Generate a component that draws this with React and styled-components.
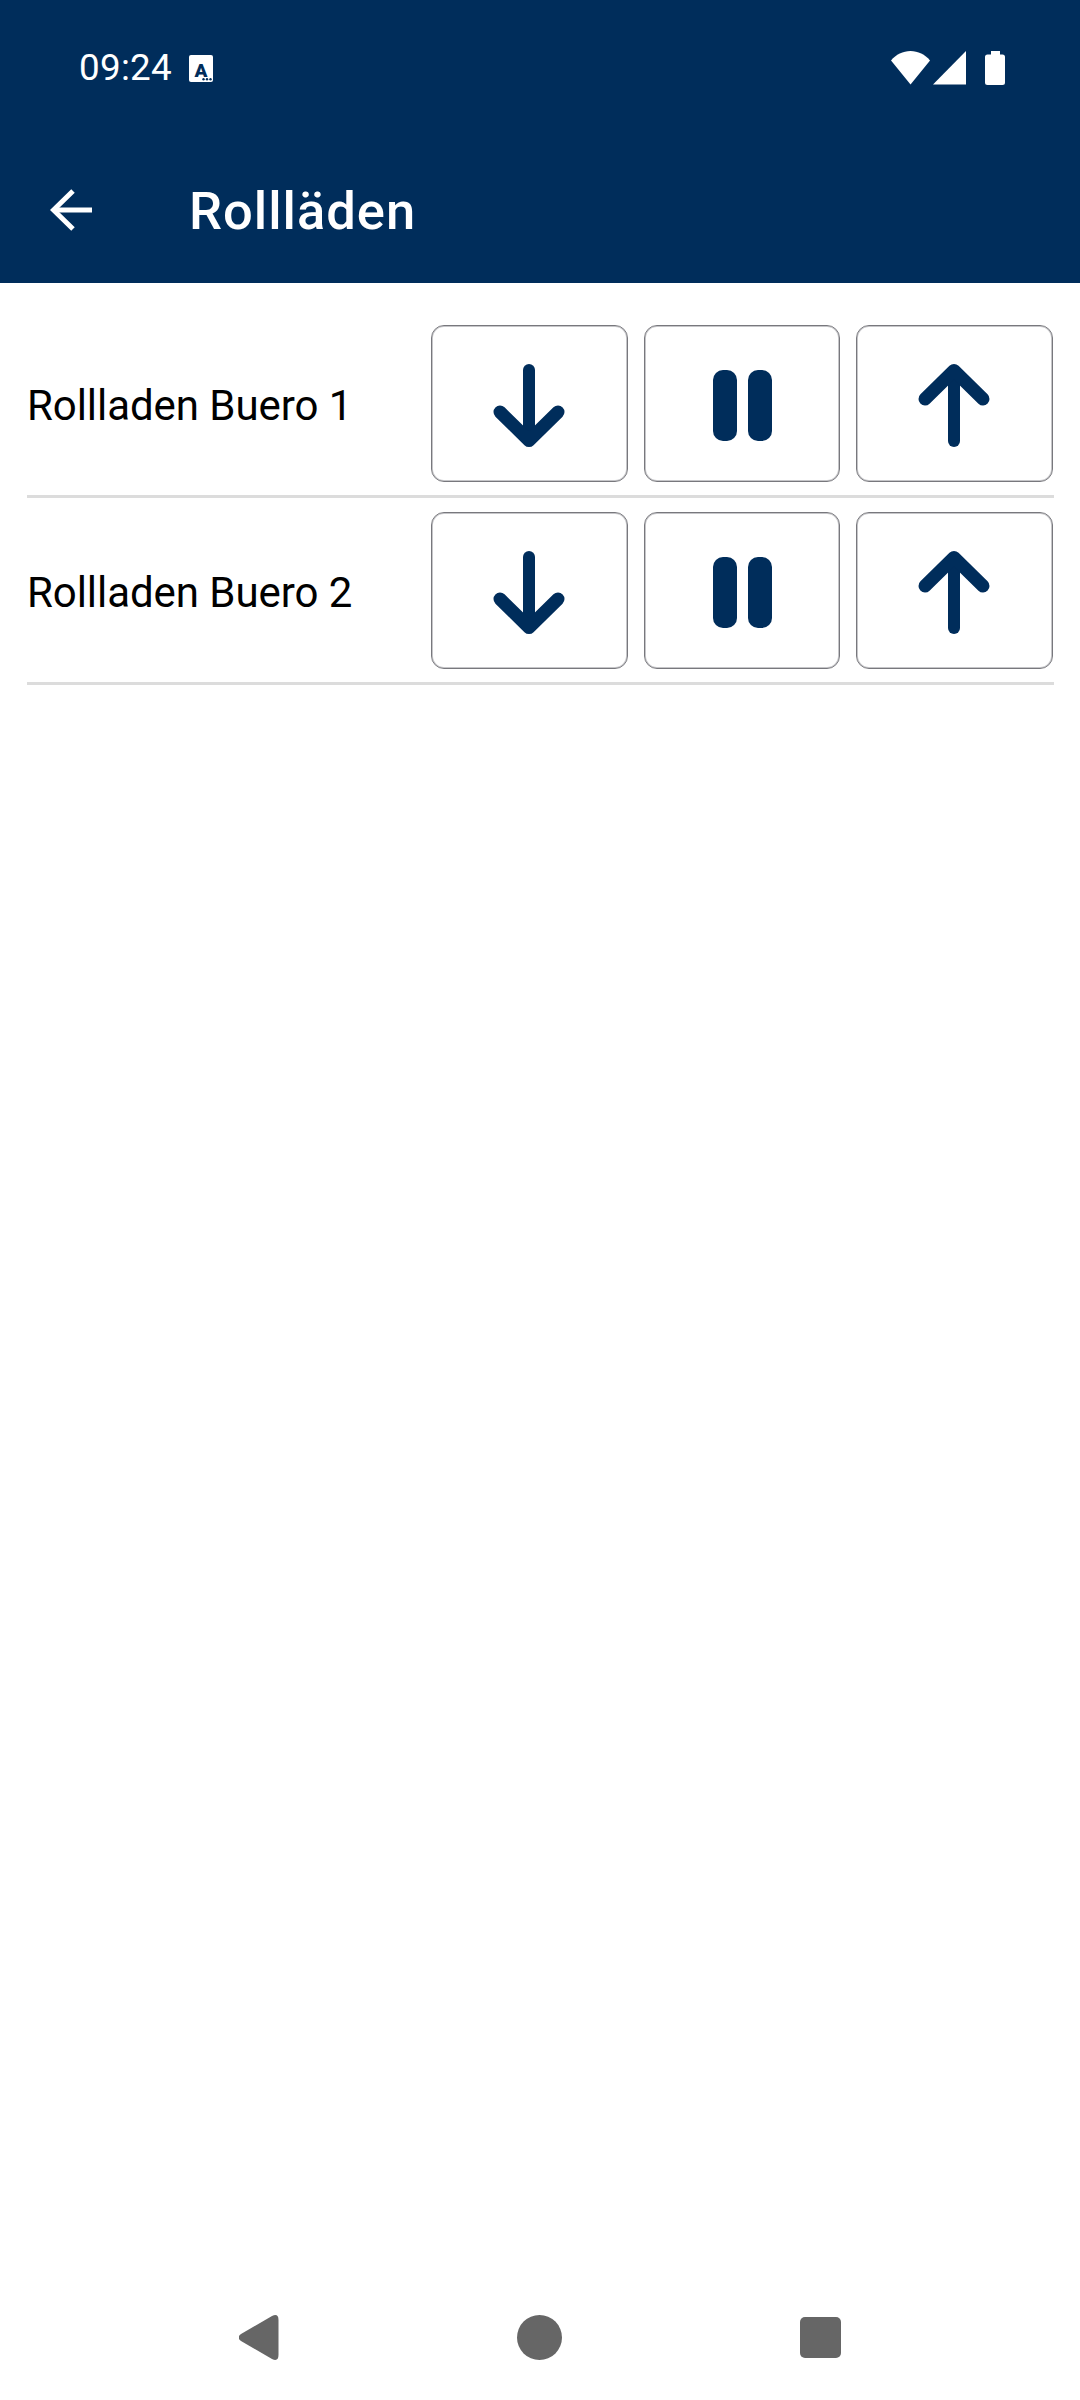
import React from "react";
import styled, { createGlobalStyle } from "styled-components";

const NAVY = "#002d5b";

const Global = createGlobalStyle`
  html, body { margin: 0; padding: 0; background: #fff; }
  body { font-family: Roboto, "Liberation Sans", sans-serif; }
`;

const Screen = styled.div`
  width: 1080px;
  height: 2400px;
  display: flex;
  flex-direction: column;
  background: #fff;
`;

const Header = styled.header`
  background: ${NAVY};
  color: #fff;
  height: 283px;
  display: flex;
  flex-direction: column;
`;

const StatusBar = styled.div`
  height: 136px;
  display: flex;
  align-items: center;
  padding: 0 75px 0 79px;
  box-sizing: border-box;
`;

const Time = styled.span`
  font-size: 36.75px;
  line-height: 1;
  font-weight: 400;
  letter-spacing: 0.3px;
`;

const NoteIcon = styled.svg`
  display: block;
  margin-left: 17px;
`;

const StatusIcons = styled.div`
  margin-left: auto;
  display: flex;
  align-items: center;
`;

const StatusSvg = styled.svg`
  display: block;
  margin-left: ${(p) => p.$gap || 0}px;
`;

const Toolbar = styled.div`
  flex: 1;
  display: flex;
  align-items: center;
  padding-left: 50px;
`;

const BackButton = styled.div`
  width: 42px;
  height: 42px;
  display: flex;
`;

const Title = styled.h1`
  margin: 4px 0 0 97px;
  font-size: 52.5px;
  line-height: 1;
  font-weight: 500;
  letter-spacing: 1px;
  color: #fff;
`;

const List = styled.main`
  flex: 1;
  padding: 28px 26px 0 27px;
`;

const Row = styled.div`
  display: flex;
  align-items: center;
  padding: 14px 1.5px 13px 0;
  border-bottom: 3px solid #dcdcdc;
`;

const RowLabel = styled.span`
  flex: 1;
  padding-top: 4px;
  font-size: 42px;
  line-height: 1;
  letter-spacing: -0.06px;
  color: #000;
`;

const Controls = styled.div`
  display: flex;
  gap: 16px;
`;

const ControlButton = styled.button`
  width: 196.5px;
  height: 157px;
  box-sizing: border-box;
  background: #fff;
  border: 1px solid #78787d;
  box-shadow: inset 0 0 0 1px #c6c6c9;
  border-radius: 13px;
  padding: 4px 0 0;
  display: flex;
  align-items: center;
  justify-content: center;
`;

const NavBar = styled.nav`
  height: 126px;
  padding-right: 1px;
  display: grid;
  grid-template-columns: repeat(3, 281px);
  justify-content: center;
  align-items: center;
  justify-items: center;
`;

const DownIcon = () => (
  <svg width="72" height="83" viewBox="0 0 72 83" fill="none" stroke={NAVY} strokeWidth="12" strokeLinecap="round" strokeLinejoin="round">
    <path d="M36 6V76" />
    <path d="M7 48L36 76.500L65 48" strokeWidth="13" />
  </svg>
);

const UpIcon = () => (
  <svg width="72" height="83" viewBox="0 0 72 83" fill="none" stroke={NAVY} strokeWidth="12" strokeLinecap="round" strokeLinejoin="round">
    <path d="M36 77V7" />
    <path d="M7 35L36 6.500L65 35" strokeWidth="13" />
  </svg>
);

const PauseIcon = () => (
  <svg width="60" height="71" viewBox="0 0 60 71" fill={NAVY}>
    <rect x="1" y="0" width="24" height="71" rx="10" />
    <rect x="36" y="0" width="24" height="71" rx="10" />
  </svg>
);

const controls = [
  { key: "down", Icon: DownIcon },
  { key: "pause", Icon: PauseIcon },
  { key: "up", Icon: UpIcon },
];

const rows = ["Rollladen Buero 1", "Rollladen Buero 2"];

export default function App() {
  return (
    <>
      <Global />
      <Screen>
        <Header>
          <StatusBar>
            <Time>09:24</Time>
            <NoteIcon width="24" height="27" viewBox="0 0 24 27">
              <rect width="24" height="27" rx="2" fill="#fff" />
              <text x="12" y="22" textAnchor="middle" fontFamily="Roboto, sans-serif" fontWeight="900" fontSize="19" fill={NAVY}>A</text>
              <circle cx="14.5" cy="24.3" r="1.2" fill={NAVY} />
              <circle cx="18" cy="24.3" r="1.2" fill={NAVY} />
              <circle cx="21.5" cy="24.3" r="1.2" fill={NAVY} />
            </NoteIcon>
            <StatusIcons>
              <StatusSvg width="39" height="34" viewBox="0 0 39 34">
                <path d="M0 9.500C5 3.500 12 0 19.500 0C27 0 34 3.500 39 9.500L19.500 33.500Z" fill="#fff" />
              </StatusSvg>
              <StatusSvg $gap={3} width="33" height="34" viewBox="0 0 33 34">
                <path d="M33 0V33.500H0Z" fill="#fff" />
              </StatusSvg>
              <StatusSvg $gap={19} width="20" height="34" viewBox="0 0 20 34">
                <path d="M6 0H15V3.500H17.500Q20 3.500 20 6V31.500Q20 34 17.500 34H2.500Q0 34 0 31.500V6Q0 3.500 2.500 3.500H6Z" fill="#fff" />
              </StatusSvg>
            </StatusIcons>
          </StatusBar>
          <Toolbar>
            <BackButton>
              <svg width="42" height="42" viewBox="0 0 42 42" fill="none" stroke="#fff" strokeWidth="5">
                <path d="M42 21H4" />
                <path d="M23 2L3.500 21L23 40" />
              </svg>
            </BackButton>
            <Title>Rollläden</Title>
          </Toolbar>
        </Header>
        <List>
          {rows.map((label) => (
            <Row key={label}>
              <RowLabel>{label}</RowLabel>
              <Controls>
                {controls.map(({ key, Icon }) => (
                  <ControlButton key={key}>
                    <Icon />
                  </ControlButton>
                ))}
              </Controls>
            </Row>
          ))}
        </List>
        <NavBar>
          <svg width="40" height="45" viewBox="0 0 40 45" fill="#666">
            <path d="M33 1Q39.500 -2 39.500 5V40Q39.500 47 33 44L2 26Q-3 22.500 2 19Z" />
          </svg>
          <svg width="45" height="45" viewBox="0 0 45 45" fill="#666">
            <circle cx="22.500" cy="22.500" r="22.500" />
          </svg>
          <svg width="41" height="41" viewBox="0 0 41 41" fill="#666">
            <rect width="41" height="41" rx="5" />
          </svg>
        </NavBar>
      </Screen>
    </>
  );
}
